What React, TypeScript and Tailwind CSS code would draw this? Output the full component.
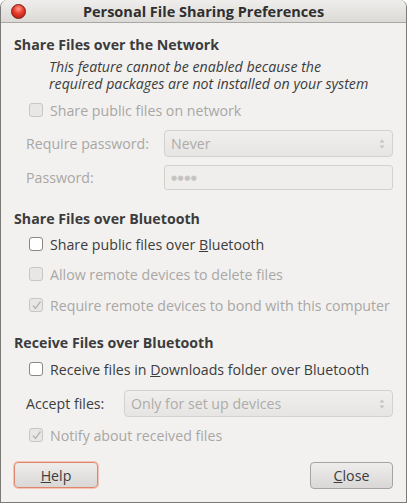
import React from "react";

const font = { fontFamily: "'Open Sans', 'DejaVu Sans', sans-serif" };

function Check({ checked, disabled }: { checked?: boolean; disabled?: boolean }) {
  return (
    <span
      className={`inline-flex h-[14px] w-[14px] shrink-0 items-center justify-center rounded-[3px] border ${
        disabled ? "border-[#c8c6c3] bg-[#e8e7e6]" : "border-[#8a8784] bg-white"
      }`}
    >
      {checked && (
        <svg width="11" height="11" viewBox="0 0 11 11">
          <path d="M2 5.5 L4.5 8.5 L9.5 1.5" fill="none" stroke={disabled ? "#b6b4b1" : "#444"} strokeWidth="1.3" />
        </svg>
      )}
    </span>
  );
}

function CheckRow({ label, checked, disabled }: { label: React.ReactNode; checked?: boolean; disabled?: boolean }) {
  return (
    <div className="flex h-[30px] items-center gap-[7px] pl-[28px]">
      <Check checked={checked} disabled={disabled} />
      <span className={`whitespace-nowrap ${disabled ? "text-[#a9a7a4]" : "text-[#3c3c3c]"}`}>{label}</span>
    </div>
  );
}

function Combo({ value }: { value: string }) {
  return (
    <div className="flex h-[27px] flex-1 items-center justify-between rounded-[4px] border border-[#d3d1ce] bg-gradient-to-b from-[#f0efee] to-[#e6e5e4] pl-[6px] pr-[7px] text-[#aeaca9]">
      <span>{value}</span>
      <svg width="6" height="12" viewBox="0 0 6 12">
        <path d="M0.5 4.5 L3 1.5 L5.5 4.5 Z M0.5 7.5 L3 10.5 L5.5 7.5 Z" fill="#c4c2bf" />
      </svg>
    </div>
  );
}

export default function App() {
  return (
    <div className="h-[503px] w-[407px] overflow-hidden bg-white text-[14.2px] leading-[19px]" style={font}>
      <div className="flex h-full flex-col rounded-t-[7px] border border-t-0 border-[#7d7b78] bg-[#f2f1f0]">
        {/* title bar */}
        <div className="relative flex h-[23px] items-center justify-center rounded-t-[7px] border-b border-[#a9a7a4] bg-gradient-to-b from-[#efeeec] to-[#dcdad7]">
          <span className="absolute left-[10px] top-[4px] h-[15px] w-[15px] rounded-full border border-[#7a1a12] bg-[radial-gradient(circle_at_50%_30%,#ff9a8a_0%,#e8392a_45%,#a81c10_100%)]" />
          <span className="text-[14.5px] font-bold text-[#2f2f2f]">Personal File Sharing Preferences</span>
        </div>

        <div className="flex flex-1 flex-col px-[13px] pt-[12px]">
          <div className="font-bold text-[#3c3c3c]">Share Files over the Network</div>
          <div className="mt-[4px] pl-[35px] leading-[17px] italic text-[#3c3c3c]">
            This feature cannot be enabled because the
            <br />
            required packages are not installed on your system
          </div>
          <div className="-ml-[13px] mt-[3px]">
            <CheckRow label="Share public files on network" disabled />
          </div>
          <div className="mt-[5px] flex items-center pl-[12px] text-[#a9a7a4]">
            <span className="w-[138px]">Require password:</span>
            <Combo value="Never" />
          </div>
          <div className="mt-[8px] flex items-center pl-[12px] text-[#a9a7a4]">
            <span className="w-[138px]">Password:</span>
            <div className="flex h-[25px] flex-1 items-center rounded-[3px] border border-[#d3d1ce] bg-[#efeeed] pl-[6px] text-[7px] tracking-[0.5px] text-[#c6c4c1]">
              ●●●●
            </div>
          </div>

          <div className="mt-[19px] font-bold text-[#3c3c3c]">Share Files over Bluetooth</div>
          <div className="-ml-[13px] mt-[1px]">
            <CheckRow label={<>Share public files over <span className="underline">B</span>luetooth</>} />
            <CheckRow label="Allow remote devices to delete files" disabled />
            <div className="pt-[1px]">
              <CheckRow label="Require remote devices to bond with this computer" checked disabled />
            </div>
          </div>

          <div className="mt-[13px] font-bold text-[#3c3c3c]">Receive Files over Bluetooth</div>
          <div className="-ml-[13px] mt-[2px]">
            <CheckRow label={<>Receive files in <span className="underline">D</span>ownloads folder over Bluetooth</>} />
          </div>
          <div className="mt-[6px] flex items-center pl-[12px]">
            <span className="w-[98px] text-[#3c3c3c]">Accept files:</span>
            <Combo value="Only for set up devices" />
          </div>
          <div className="-ml-[13px] mt-[3px]">
            <CheckRow label="Notify about received files" checked disabled />
          </div>

          <div className="mt-[12px] flex justify-between">
            <button className="h-[26px] w-[84px] rounded-[4px] border border-[#e0866c] bg-gradient-to-b from-[#eeedec] to-[#d9d8d6] text-[#3c3c3c] shadow-[0_0_0_1px_#f4c4b4]">
              <span className="underline">H</span>elp
            </button>
            <button className="h-[27px] w-[83px] rounded-[4px] border border-[#a6a4a1] bg-gradient-to-b from-[#eeedec] to-[#d9d8d6] text-[#3c3c3c]">
              <span className="underline">C</span>lose
            </button>
          </div>
        </div>
      </div>
    </div>
  );
}
